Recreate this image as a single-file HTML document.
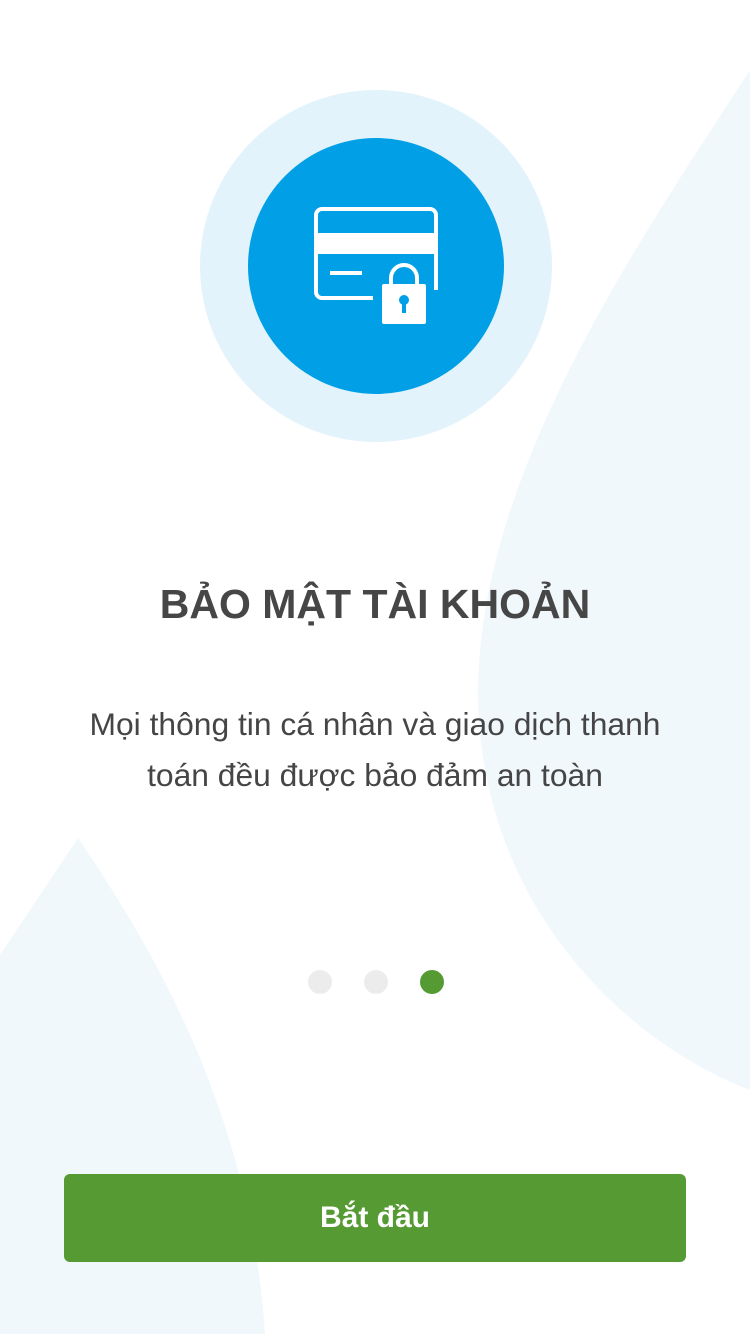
<!DOCTYPE html>
<html><head><meta charset="utf-8"><style>
body{margin:0;width:750px;height:1334px;overflow:hidden;background:#fff;font-family:"Liberation Sans","DejaVu Sans",sans-serif;position:relative}
svg.bg{position:absolute;left:0;top:0}
h1{position:absolute;top:578px;left:0;width:750px;text-align:center;margin:0;font-size:41px;font-weight:bold;color:#464646;line-height:52px}
p{position:absolute;top:699px;left:60px;width:630px;text-align:center;margin:0;font-size:31.8px;color:#454545;line-height:51px}
.dot{position:absolute;top:970px;width:24px;height:24px;border-radius:50%;background:#ececec}
.btn{position:absolute;left:64px;top:1174px;width:622px;height:88px;background:#559a33;border-radius:6px;color:#fff;font-size:30px;font-weight:bold;text-align:center;line-height:88px}
</style></head><body>
<svg class="bg" width="750" height="1334">
<path d="M750 70 C640 240 480 470 478 690 C478 900 620 1040 750 1090 Z" fill="#f1f8fc"/>
<path d="M78 838 C140 930 250 1100 265 1334 L0 1334 L0 955 Z" fill="#f1f8fc"/>
<circle cx="376" cy="266" r="176" fill="#e3f3fb"/>
<circle cx="376" cy="266" r="128" fill="#009fe6"/>
<path d="M373 298 H322 a6 6 0 0 1 -6 -6 V215 a6 6 0 0 1 6 -6 H430 a6 6 0 0 1 6 6 V290" fill="none" stroke="#fff" stroke-width="4"/>
<rect x="316" y="233" width="120" height="21" fill="#fff"/>
<rect x="330" y="271" width="32" height="4" fill="#fff"/>
<path d="M391 286 V278 a13 13 0 0 1 26 0 V286" fill="none" stroke="#fff" stroke-width="4"/>
<rect x="382" y="284" width="44" height="40" rx="2" fill="#fff"/>
<circle cx="404" cy="300" r="5" fill="#009fe6"/>
<rect x="402" y="302" width="4" height="11" fill="#009fe6"/>
</svg>
<h1>BẢO MẬT TÀI KHOẢN</h1>
<p>Mọi thông tin cá nhân và giao dịch thanh toán đều được bảo đảm an toàn</p>
<div class="dot" style="left:308px"></div>
<div class="dot" style="left:364px"></div>
<div class="dot" style="left:420px;background:#559a33"></div>
<div class="btn">Bắt đầu</div>
</body></html>
